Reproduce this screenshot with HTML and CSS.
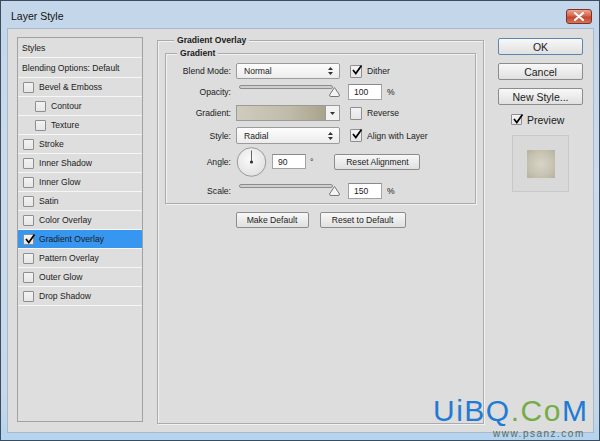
FILE: index.html
```html
<!DOCTYPE html>
<html>
<head>
    <title>Layer Style</title>
    <link rel="stylesheet" href="styles.css">
</head>
<body>
    <div class="window">
        <div class="titlebar">
            <span class="title">Layer Style</span>
            <span class="close">
                <svg width="12" height="9" viewBox="0 0 12 9"><path d="M2 1 L10 8 M10 1 L2 8" stroke="#fff" stroke-width="2.2" stroke-linecap="round"/></svg>
            </span>
        </div>
        <div class="client">
            <!-- left list of effects -->
            <ul class="style-list">
                <li class="head">Styles</li>
                <li class="head">Blending Options: Default</li>
                <li><span class="cb"></span>Bevel &amp; Emboss</li>
                <li class="sub"><span class="cb"></span>Contour</li>
                <li class="sub"><span class="cb"></span>Texture</li>
                <li><span class="cb"></span>Stroke</li>
                <li><span class="cb"></span>Inner Shadow</li>
                <li><span class="cb"></span>Inner Glow</li>
                <li><span class="cb"></span>Satin</li>
                <li><span class="cb"></span>Color Overlay</li>
                <li class="active"><span class="cb"><svg class="tick" viewBox="0 0 12 12"><path d="M2 6 L4.8 9.5 L10.5 1.5" fill="none" stroke="#000" stroke-width="1.7"/></svg></span>Gradient Overlay</li>
                <li><span class="cb"></span>Pattern Overlay</li>
                <li><span class="cb"></span>Outer Glow</li>
                <li><span class="cb"></span>Drop Shadow</li>
            </ul>

            <div class="main">
                <div class="group outer">
                    <span class="group-title">Gradient Overlay</span>
                    <div class="group inner">
                        <span class="group-title">Gradient</span>
                        <div class="rows">
                            <div class="row r1">
                                <label>Blend Mode:</label>
                                <div class="select">Normal
                                    <svg class="updown" width="5" height="8" viewBox="0 0 5 8"><path d="M2.5 0 L5 3 L0 3 Z M0 5 L5 5 L2.5 8 Z" fill="#333"/></svg>
                                </div>
                                <span class="cb big"><svg class="tick" viewBox="0 0 12 12"><path d="M2 6 L4.8 9.5 L10.5 1.5" fill="none" stroke="#000" stroke-width="1.7"/></svg></span>
                                <span class="opt">Dither</span>
                            </div>
                            <div class="row r2">
                                <label>Opacity:</label>
                                <div class="slider">
                                    <div class="track"></div>
                                    <svg class="thumb" width="11" height="10" viewBox="0 0 11 10"><path d="M5.5 0.5 L10.5 8 Q10.5 9.5 9 9.5 L2 9.5 Q0.5 9.5 0.5 8 Z" fill="#f4f4f4" stroke="#777"/></svg>
                                </div>
                                <div class="field">100</div>
                                <span class="unit">%</span>
                            </div>
                            <div class="row r3">
                                <label>Gradient:</label>
                                <div class="grad">
                                    <div class="grad-bar"></div>
                                    <div class="grad-drop"><svg width="5" height="3" viewBox="0 0 5 3"><path d="M0 0 L5 0 L2.5 3 Z" fill="#333"/></svg></div>
                                </div>
                                <span class="cb big"></span>
                                <span class="opt">Reverse</span>
                            </div>
                            <div class="row r4">
                                <label>Style:</label>
                                <div class="select">Radial
                                    <svg class="updown" width="5" height="8" viewBox="0 0 5 8"><path d="M2.5 0 L5 3 L0 3 Z M0 5 L5 5 L2.5 8 Z" fill="#333"/></svg>
                                </div>
                                <span class="cb big"><svg class="tick" viewBox="0 0 12 12"><path d="M2 6 L4.8 9.5 L10.5 1.5" fill="none" stroke="#000" stroke-width="1.7"/></svg></span>
                                <span class="opt">Align with Layer</span>
                            </div>
                            <div class="row r5">
                                <label>Angle:</label>
                                <svg class="dial" width="31" height="30" viewBox="0 0 31 30">
                                    <defs>
                                        <radialGradient id="dialbg" cx="0.45" cy="0.4" r="0.6">
                                            <stop offset="0" stop-color="#fafafa"/>
                                            <stop offset="1" stop-color="#e2e2e2"/>
                                        </radialGradient>
                                    </defs>
                                    <circle cx="15.5" cy="15" r="14.3" fill="url(#dialbg)" stroke="#9a9a9a"/>
                                    <line x1="15.5" y1="15" x2="15.5" y2="3.5" stroke="#666" stroke-width="1"/>
                                    <circle cx="15.5" cy="15" r="1.6" fill="#333"/>
                                </svg>
                                <div class="field">90</div>
                                <span class="deg">&deg;</span>
                                <button class="btn reset-align">Reset Alignment</button>
                            </div>
                            <div class="row r6">
                                <label>Scale:</label>
                                <div class="slider">
                                    <div class="track"></div>
                                    <svg class="thumb" width="11" height="10" viewBox="0 0 11 10"><path d="M5.5 0.5 L10.5 8 Q10.5 9.5 9 9.5 L2 9.5 Q0.5 9.5 0.5 8 Z" fill="#f4f4f4" stroke="#777"/></svg>
                                </div>
                                <div class="field">150</div>
                                <span class="unit">%</span>
                            </div>
                        </div>
                    </div>
                    <div class="defaults">
                        <button class="btn make-default">Make Default</button>
                        <button class="btn reset-default">Reset to Default</button>
                    </div>
                </div>
            </div>

            <div class="side">
                <button class="btn side-btn ok">OK</button>
                <button class="btn side-btn">Cancel</button>
                <button class="btn side-btn">New Style...</button>
                <div class="preview">
                    <span class="cb"><svg class="tick" viewBox="0 0 12 12"><path d="M2 6 L4.8 9.5 L10.5 1.5" fill="none" stroke="#000" stroke-width="1.7"/></svg></span>
                    <span>Preview</span>
                </div>
                <div class="swatch-box">
                    <div class="swatch"></div>
                </div>
            </div>
        </div>

        <div class="watermark">
            <div class="wm-logo"><span class="wm-blue">UiBQ</span><span class="wm-green">.Co</span><span class="wm-blue">M</span></div>
            <div class="wm-url">www.psanz.com</div>
        </div>
    </div>
</body>
</html>
```

FILE: styles.css
```css
body {
    margin: 0;
    font-family: "Liberation Sans", Arial, sans-serif;
    color: #1b1b1b;
}
.window {
    position: relative;
    width: 600px;
    height: 441px;
    box-sizing: border-box;
    border: 1px solid #3b4c5f;
    padding: 0 5px 7px 6px;
    background: linear-gradient(#c3d6ea, #cbdbeb 40%, #c6d8ea 90%, #b4d4ef);
    display: flex;
    flex-direction: column;
    overflow: hidden;
}
.titlebar {
    height: 27px;
    display: flex;
    justify-content: space-between;
    align-items: flex-start;
}
.title {
    font-size: 10.5px;
    margin: 9px 0 0 4px;
    color: #111;
}
.close {
    margin: 8px 2px 0 0;
    width: 26px;
    height: 15px;
    box-sizing: border-box;
    border: 1px solid #7c3224;
    border-radius: 3px;
    background: linear-gradient(#eaa594, #d8654b 45%, #c2462d 55%, #d7735a);
    display: flex;
    align-items: center;
    justify-content: center;
}
.client {
    flex: 1;
    display: flex;
    align-items: stretch;
    background: #dddddd;
    border: 1px solid #a9b9ca;
    padding: 8px 9px 10px 9px;
    font-size: 8.6px;
}

/* left list */
.style-list {
    list-style: none;
    margin: 0;
    padding: 0;
    width: 126px;
    box-sizing: border-box;
    border: 1px solid #a2a2a2;
    background: #dedede;
}
.style-list li {
    height: 18px;
    border-bottom: 1px solid #f6f6f6;
    display: flex;
    align-items: center;
    padding-left: 5px;
}
.style-list li.head {
    height: 19px;
    padding-left: 4px;
}
.style-list li.sub {
    padding-left: 17px;
}
.style-list li.active {
    background: #3796f0;
}
.cb {
    width: 11px;
    height: 11px;
    box-sizing: border-box;
    border: 1px solid #8e8e8e;
    border-radius: 1px;
    background: linear-gradient(#f3f3f3, #e6e6e6);
    margin-right: 5px;
    position: relative;
    flex-shrink: 0;
}
.cb.big {
    width: 12px;
    height: 13px;
}
.tick {
    position: absolute;
    left: 0;
    top: -2px;
    width: 12px;
    height: 12px;
}

/* middle column */
.main {
    width: 327px;
    margin-left: 14px;
    display: flex;
    flex-direction: column;
}
.group {
    border: 1px solid #ababab;
    box-shadow: 1px 1px 0 #f2f2f2, inset 1px 1px 0 #f2f2f2;
}
.group-title {
    display: block;
    width: max-content;
    font-weight: bold;
    line-height: 12px;
    padding: 0 3px;
    background: #dddddd;
    margin-top: -7px;
}
.outer {
    flex: 1;
    margin-top: 3px;
    margin-bottom: -2px;
    padding: 0 7px;
}
.outer > .group-title {
    margin-left: 9px;
}
.inner {
    margin-top: 7px;
    padding-bottom: 4px;
}
.inner > .group-title {
    margin-left: 11px;
}
.rows {
    padding-top: 4px;
}
.row {
    display: flex;
    align-items: center;
    height: 16px;
    margin-bottom: 5px;
}
.row label {
    width: 65px;
    text-align: right;
    margin-right: 5px;
    flex-shrink: 0;
}
.row.r3 { margin-bottom: 6px; }
.row.r4 { height: 17px; margin-bottom: 3px; }
.row.r5 { height: 29px; margin-bottom: 7px; }
.row.r6 { margin-bottom: 0; }
.select {
    width: 104px;
    height: 16px;
    box-sizing: border-box;
    border: 1px solid #9b9b9b;
    border-radius: 2px;
    background: linear-gradient(#fdfdfd, #ececec);
    padding: 0 6px 0 7px;
    display: flex;
    align-items: center;
    justify-content: space-between;
    margin-right: 10px;
}
.r4 .select { height: 17px; }
.opt {
    white-space: nowrap;
}
.slider {
    position: relative;
    width: 104px;
    height: 16px;
    margin-right: 8px;
}
.track {
    margin: 1px 0 0 3px;
    width: 94px;
    height: 4px;
    box-sizing: border-box;
    border: 1px solid #8d8d8d;
    border-radius: 2px;
    background: #cfcfcf;
}
.thumb {
    position: absolute;
    left: 93px;
    top: 3px;
}
.field {
    width: 34px;
    height: 15px;
    box-sizing: border-box;
    border: 1px solid #a3a3a3;
    border-top-color: #8a8a8a;
    background: #fff;
    padding-left: 5px;
    display: flex;
    align-items: center;
}
.r2 .field, .r6 .field { height: 16px; }
.unit {
    margin-left: 5px;
}
.grad {
    width: 104px;
    height: 16px;
    box-sizing: border-box;
    border: 1px solid #9b9b9b;
    display: flex;
    margin-right: 10px;
    background: #f2f2f2;
}
.grad-bar {
    flex: 1;
    background: linear-gradient(to right, #cfccbe, #c0bba9 60%, #a9a38d);
}
.grad-drop {
    width: 13px;
    border-left: 1px solid #9b9b9b;
    display: flex;
    align-items: center;
    justify-content: center;
}
.dial {
    margin-right: 5px;
}
.deg {
    margin-left: 4px;
    margin-right: 21px;
}
.btn {
    font-family: "Liberation Sans", Arial, sans-serif;
    font-size: 8.6px;
    color: #1b1b1b;
    height: 16px;
    box-sizing: border-box;
    border: 1px solid #8c8c8c;
    border-radius: 2px;
    background: linear-gradient(#f8f8f8, #ececec 50%, #e0e0e0);
    padding: 0;
}
.reset-align {
    width: 86px;
}
.defaults {
    display: flex;
    justify-content: center;
    gap: 11px;
    margin-top: 8px;
}
.make-default { width: 73px; }
.reset-default { width: 86px; }

/* right column */
.side {
    width: 85px;
    margin-left: 14px;
    margin-top: 1px;
}
.side-btn {
    display: block;
    width: 85px;
    height: 17px;
    font-size: 10.5px;
    margin-bottom: 8px;
}
.side-btn.ok {
    border-color: #5d87ae;
}
.preview {
    display: flex;
    align-items: center;
    font-size: 10.5px;
    padding-left: 13px;
    margin-top: 9px;
    height: 11px;
}
.swatch-box {
    width: 57px;
    height: 57px;
    box-sizing: border-box;
    margin: 10px 0 0 14px;
    border: 1px solid #c8c8c8;
    background: #d9d9d9;
    display: flex;
    align-items: center;
    justify-content: center;
}
.swatch {
    width: 28px;
    height: 28px;
    background: radial-gradient(circle, #d7d4c7, #c7c3b2 60%, #b6b19e);
}

/* site watermark on the screenshot */
.watermark {
    position: absolute;
    left: 432px;
    top: 393px;
}
.wm-logo {
    font-size: 30px;
    letter-spacing: 1.5px;
    white-space: nowrap;
}
.wm-blue {
    color: #1f7bd3;
}
.wm-green {
    color: #73ad45;
}
.wm-url {
    font-size: 10px;
    letter-spacing: 1.5px;
    color: #5f6a61;
    margin-left: 60px;
}
```
